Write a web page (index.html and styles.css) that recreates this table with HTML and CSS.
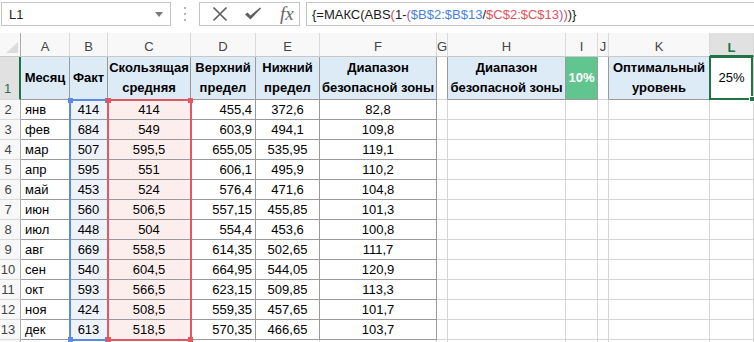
FILE: index.html
```html
<!DOCTYPE html>
<html lang="ru">
<head>
<meta charset="utf-8">
<title>Excel</title>
<link rel="stylesheet" href="styles.css">
</head>
<body>
<div class="app">
  <div class="fbar">
    <div class="namebox"><span>L1</span><svg class="dd" width="8" height="5" viewBox="0 0 8 5"><path d="M0 0H8L4 5Z" fill="#7a7a7a"/></svg></div>
    <div class="grip"><svg width="3" height="14" viewBox="0 0 3 14"><rect x="0" y="0" width="2" height="2" fill="#b4b4b4"/><rect x="0" y="6" width="2" height="2" fill="#b4b4b4"/><rect x="0" y="12" width="2" height="2" fill="#b4b4b4"/></svg></div>
    <div class="fxbtns">
      <svg class="ico-x" width="16" height="16" viewBox="0 0 16 16"><path d="M1.5 1.5L14.5 14.5M14.5 1.5L1.5 14.5" stroke="#606060" stroke-width="1.7" fill="none"/></svg>
      <svg class="ico-ok" width="18" height="16" viewBox="0 0 18 16"><path d="M1 8.5L6.5 13.5L17 2.5L16 1.5L6.5 9.5L3.5 6.5Z" fill="#606060"/></svg>
      <span class="fx">fx</span>
    </div>
    <div class="finput"><span>{=МАКС(ABS</span><span class="pr">(</span><span>1-</span><span class="pp">(</span><span class="rb">$B$2:$B$13</span><span>/</span><span class="rc">$C$2:$C$13</span><span class="pp">)</span><span class="pr">)</span><span>)}</span></div>
  </div>

  <div class="sheet">
    <div class="h corner"><svg width="12" height="11" viewBox="0 0 12 11"><path d="M12 0V11H0Z" fill="#dcdcdc"/></svg></div>
    <div class="h">A</div><div class="h">B</div><div class="h">C</div><div class="h">D</div><div class="h">E</div><div class="h">F</div><div class="h">G</div><div class="h">H</div><div class="h">I</div><div class="h">J</div><div class="h">K</div><div class="h hs">L</div>

    <div class="r rs">1</div>
    <div class="c t hd">Месяц</div>
    <div class="c t hd">Факт</div>
    <div class="c t hd">Скользящая<br>средняя</div>
    <div class="c t hd">Верхний<br>предел</div>
    <div class="c t hd">Нижний<br>предел</div>
    <div class="c t hd">Диапазон<br>безопасной зоны</div>
    <div class="c edge"></div>
    <div class="c t hd">Диапазон<br>безопасной зоны</div>
    <div class="c t pct">10%</div>
    <div class="c edge"></div>
    <div class="c t hd">Оптимальный<br>уровень</div>
    <div class="c mid">25%</div>

    <div class="r">2</div><div class="c t l">янв</div><div class="c t m bt">414</div><div class="c t m pk">414</div><div class="c t rt">455,4</div><div class="c t m">372,6</div><div class="c t m">82,8</div><div class="c"></div><div class="c"></div><div class="c"></div><div class="c"></div><div class="c"></div><div class="c"></div>
    <div class="r">3</div><div class="c t l">фев</div><div class="c t m bt">684</div><div class="c t m pk">549</div><div class="c t rt">603,9</div><div class="c t m">494,1</div><div class="c t m">109,8</div><div class="c"></div><div class="c"></div><div class="c"></div><div class="c"></div><div class="c"></div><div class="c"></div>
    <div class="r">4</div><div class="c t l">мар</div><div class="c t m bt">507</div><div class="c t m pk">595,5</div><div class="c t rt">655,05</div><div class="c t m">535,95</div><div class="c t m">119,1</div><div class="c"></div><div class="c"></div><div class="c"></div><div class="c"></div><div class="c"></div><div class="c"></div>
    <div class="r">5</div><div class="c t l">апр</div><div class="c t m bt">595</div><div class="c t m pk">551</div><div class="c t rt">606,1</div><div class="c t m">495,9</div><div class="c t m">110,2</div><div class="c"></div><div class="c"></div><div class="c"></div><div class="c"></div><div class="c"></div><div class="c"></div>
    <div class="r">6</div><div class="c t l">май</div><div class="c t m bt">453</div><div class="c t m pk">524</div><div class="c t rt">576,4</div><div class="c t m">471,6</div><div class="c t m">104,8</div><div class="c"></div><div class="c"></div><div class="c"></div><div class="c"></div><div class="c"></div><div class="c"></div>
    <div class="r">7</div><div class="c t l">июн</div><div class="c t m bt">560</div><div class="c t m pk">506,5</div><div class="c t rt">557,15</div><div class="c t m">455,85</div><div class="c t m">101,3</div><div class="c"></div><div class="c"></div><div class="c"></div><div class="c"></div><div class="c"></div><div class="c"></div>
    <div class="r">8</div><div class="c t l">июл</div><div class="c t m bt">448</div><div class="c t m pk">504</div><div class="c t rt">554,4</div><div class="c t m">453,6</div><div class="c t m">100,8</div><div class="c"></div><div class="c"></div><div class="c"></div><div class="c"></div><div class="c"></div><div class="c"></div>
    <div class="r">9</div><div class="c t l">авг</div><div class="c t m bt">669</div><div class="c t m pk">558,5</div><div class="c t rt">614,35</div><div class="c t m">502,65</div><div class="c t m">111,7</div><div class="c"></div><div class="c"></div><div class="c"></div><div class="c"></div><div class="c"></div><div class="c"></div>
    <div class="r">10</div><div class="c t l">сен</div><div class="c t m bt">540</div><div class="c t m pk">604,5</div><div class="c t rt">664,95</div><div class="c t m">544,05</div><div class="c t m">120,9</div><div class="c"></div><div class="c"></div><div class="c"></div><div class="c"></div><div class="c"></div><div class="c"></div>
    <div class="r">11</div><div class="c t l">окт</div><div class="c t m bt">593</div><div class="c t m pk">566,5</div><div class="c t rt">623,15</div><div class="c t m">509,85</div><div class="c t m">113,3</div><div class="c"></div><div class="c"></div><div class="c"></div><div class="c"></div><div class="c"></div><div class="c"></div>
    <div class="r">12</div><div class="c t l">ноя</div><div class="c t m bt">424</div><div class="c t m pk">508,5</div><div class="c t rt">559,35</div><div class="c t m">457,65</div><div class="c t m">101,7</div><div class="c"></div><div class="c"></div><div class="c"></div><div class="c"></div><div class="c"></div><div class="c"></div>
    <div class="r">13</div><div class="c t l">дек</div><div class="c t m bt">613</div><div class="c t m pk">518,5</div><div class="c t rt">570,35</div><div class="c t m">466,65</div><div class="c t m">103,7</div><div class="c"></div><div class="c"></div><div class="c"></div><div class="c"></div><div class="c"></div><div class="c"></div>
    <div class="r"></div><div class="c"></div><div class="c"></div><div class="c"></div><div class="c"></div><div class="c"></div><div class="c"></div><div class="c"></div><div class="c"></div><div class="c"></div><div class="c"></div><div class="c"></div><div class="c"></div>

    <div class="ref ref-b"><i class="k tl"></i><i class="k tr"></i><i class="k bl"></i><i class="k br"></i></div>
    <div class="ref ref-c"><i class="k tl"></i><i class="k tr"></i><i class="k bl"></i><i class="k br"></i></div>
    <div class="active"><i class="fill"></i></div>
  </div>
</div>
</body>
</html>
```
FILE: styles.css
```css
* { box-sizing: border-box; }
body {
  margin: 0;
  background: #fff;
  font-family: "Liberation Sans", Arial, sans-serif;
  font-size: 13px;
  color: #000;
}
.app { width: 754px; height: 342px; overflow: hidden; }

/* formula bar */
.fbar {
  height: 33px;
  display: flex;
  align-items: flex-start;
  padding: 2px 0 0 1px;
}
.namebox {
  width: 170px;
  height: 24px;
  border: 1px solid #c6c6c6;
  display: flex;
  align-items: center;
  justify-content: space-between;
  padding: 0 7px 0 7px;
  color: #262626;
  font-size: 13px;
}
.grip {
  width: 28px;
  height: 24px;
  display: flex;
  align-items: center;
  justify-content: center;
}
.fxbtns {
  width: 101px;
  height: 24px;
  border: 1px solid #c6c6c6;
  display: flex;
  align-items: center;
  padding-left: 12px;
}
.ico-x { margin-right: 16px; }
.ico-ok { margin-right: 18px; }
.fx {
  font-family: "Liberation Serif", "Times New Roman", serif;
  font-style: italic;
  font-size: 19px;
  color: #666;
  line-height: 20px;
}
.finput {
  flex: 1;
  margin-left: 6px;
  height: 24px;
  border: 1px solid #c6c6c6;
  border-right: none;
  display: flex;
  align-items: center;
  padding-left: 5px;
  font-size: 13px;
  color: #1a1a1a;
  white-space: nowrap;
}
.pr { color: #e0495a; }
.pp { color: #a05bc0; }
.rb { color: #4a7fdc; }
.rc { color: #e4525b; }

/* sheet grid */
.sheet {
  position: relative;
  display: grid;
  grid-template-columns: 21px 49px 38px 83px 65px 64px 117px 11px 118px 32px 11px 101px 44px;
  grid-template-rows: 24px 43px repeat(12, 20px) 20px;
}
.h {
  background: #f8f8f8;
  border-right: 1px solid #dadada;
  border-bottom: 1px solid #c8c8c8;
  color: #444;
  display: flex;
  align-items: center;
  justify-content: center;
  padding-top: 4px;
  font-size: 13px;
}
.corner {
  align-items: flex-end;
  justify-content: flex-end;
  padding: 0 2px 3px 0;
  border-right-color: #ababab;
}
.hs {
  background: #e1e1e1;
  color: #217346;
  font-weight: bold;
  border-bottom: 2px solid #217346;
  padding-top: 6px;
}
.r {
  background: #f8f8f8;
  border-right: 1px solid #ababab;
  border-bottom: 1px solid #dadada;
  color: #444;
  display: flex;
  align-items: flex-end;
  justify-content: center;
  padding: 0 4px 1px 0;
  line-height: 16px;
}
.rs {
  background: #e1e1e1;
  color: #217346;
  border-right: 2px solid #217346;
  padding-bottom: 2px;
}

.c {
  border-right: 1px solid #d4d4d4;
  border-bottom: 1px solid #d4d4d4;
  white-space: nowrap;
  display: flex;
  align-items: flex-end;
  line-height: 16px;
  padding: 0 4px 1px;
}
.t { border-right-color: #9a9a9a; border-bottom-color: #9a9a9a; }
.edge { border-right-color: #9a9a9a; }
.l { justify-content: flex-start; }
.m { justify-content: center; }
.rt { justify-content: flex-end; padding-right: 3px; }
.bt { background: #edf2fb; }
.pk { background: #fdeeee; }

.hd {
  background: #ddebf7;
  font-weight: bold;
  text-align: center;
  justify-content: center;
  align-items: center;
  line-height: 20px;
  padding: 0 1px 1px;
}
.pct {
  background: #61c590;
  color: #fff;
  font-weight: bold;
  justify-content: center;
  align-items: center;
}
.mid { justify-content: center; align-items: center; }

/* reference highlights */
.ref {
  position: absolute;
  inset: -1px;
  border: 2px solid;
  pointer-events: none;
  z-index: 2;
}
.ref-b { grid-column: 3 / 4; grid-row: 3 / 15; border-color: #5b8be0; }
.ref-c { grid-column: 4 / 5; grid-row: 3 / 15; border-color: #e25860; z-index: 3; }
.ref-b .k { background: #5b8be0; }
.ref-c .k { background: #e25860; }
.k { position: absolute; width: 5px; height: 5px; }
.tl { top: -3px; left: -3px; }
.tr { top: -3px; right: -3px; }
.bl { bottom: -3px; left: -3px; }
.br { bottom: -3px; right: -3px; }

.active {
  position: absolute;
  grid-column: 13 / 14;
  grid-row: 2 / 3;
  inset: -1px 1px 0 -1px;
  border: 2px solid #217346;
  z-index: 4;
}
.fill {
  position: absolute;
  right: -4px;
  bottom: -4px;
  width: 6px;
  height: 6px;
  background: #217346;
  border: 1px solid #fff;
}
```
